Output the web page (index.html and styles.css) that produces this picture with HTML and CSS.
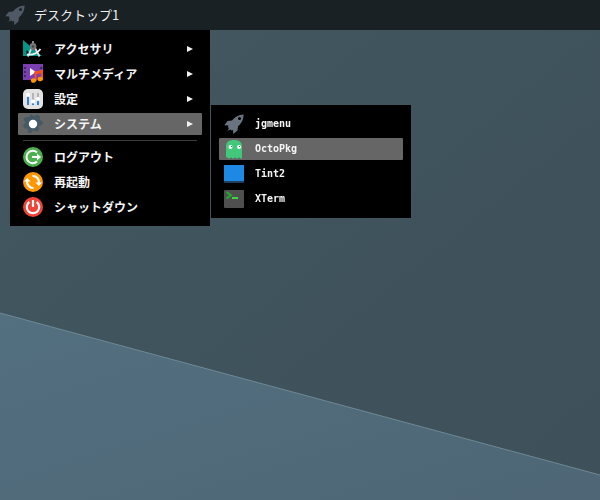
FILE: index.html
```html
<!DOCTYPE html>
<html lang="ja">
<head>
<meta charset="utf-8">
<title>デスクトップ1</title>
<link rel="stylesheet" href="styles.css">
</head>
<body>
<svg class="wallpaper" viewBox="0 0 600 500" preserveAspectRatio="none" aria-hidden="true">
  <defs>
    <linearGradient id="upper" x1="0" y1="0" x2="1" y2="1"><stop offset="0" stop-color="#425761"/><stop offset="1" stop-color="#3e5059"/></linearGradient>
    <linearGradient id="lower" x1="0" y1="0" x2="1" y2="1"><stop offset="0" stop-color="#537080"/><stop offset="1" stop-color="#4e6675"/></linearGradient>
  </defs>
  <rect width="600" height="500" fill="url(#upper)"/>
  <path d="M0 313L600 475V500H0z" fill="url(#lower)"/>
  <path d="M0 313L600 475" stroke="#6e8895" fill="none"/>
</svg>
<svg class="symbols" aria-hidden="true">
  <symbol id="rocket" viewBox="0 0 20 20">
    <path fill-rule="evenodd" d="M19.600.4C14.500.6 11 2.500 8 6.500L3.500 7 .3 11.200l4.200.3-.6 1.500 1 1-1.400 2.800 2.800-1.300 1.200 1.100 1.500-.5.3 4 4.200-3.500.5-4.300C17.500 9 19.600 5.600 19.600.4zM15.500 3.100a1.500 1.500 0 1 1 0 3 1.500 1.500 0 0 1 0-3z"/>
  </symbol>
  <symbol id="arrow" viewBox="0 0 6 6"><path d="M0 0L6 3 0 6z" fill="#f2f2f2"/></symbol>
</svg>

<header class="panel">
  <button class="launcher" type="button" aria-label="jgmenu"><svg class="icon"><use href="#rocket"/></svg></button>
  <span class="desktop-name">デスクトップ1</span>
</header>

<nav class="menu">
  <ul class="list">
    <li><button class="item" type="button">
      <svg class="icon" viewBox="0 0 20 20"><path fill="#009688" d="M0 1L19 17H0z"/><path d="M3.500 11l4 4h-4z" fill="#111"/><path d="M9 2h2v4H9z" fill="#858585"/><path d="M8.500 9L5 17.500M12 9l4.500 8.500" stroke="#dedede" stroke-width="1.800"/><circle cx="10" cy="7.500" r="3.400" fill="#757575"/><circle cx="10" cy="7.500" r="1.200" fill="#444"/><path d="M4 15.500c5.500 .8 10-.8 13.500-5.500" fill="none" stroke="#f4f4f4" stroke-width="1.800"/></svg>
      <span class="label">アクセサリ</span><svg class="arrow"><use href="#arrow"/></svg></button></li>
    <li><button class="item" type="button">
      <svg class="icon" viewBox="0 0 20 20"><path fill="#7b3fb0" d="M0 0h20v16H0z"/><path fill="#43256a" d="M1 3h2v2H1zm0 4h2v2H1zm0 4h2v2H1zM17 3h2v2h-2z"/><path fill="#fff" d="M7 4l6 4-6 4z"/><path d="M12.500 17V8.500l6.500-1.500v8.500" fill="none" stroke="#f4511e" stroke-width="2"/><path d="M11.500 7.500L20 6v3l-8.500 1.500z" fill="#f4511e"/><ellipse cx="10.500" cy="16.500" rx="2.600" ry="2.300" fill="#ff9800"/><ellipse cx="17.300" cy="15" rx="2.600" ry="2.300" fill="#ff9800"/></svg>
      <span class="label">マルチメディア</span><svg class="arrow"><use href="#arrow"/></svg></button></li>
    <li><button class="item" type="button">
      <svg class="icon" viewBox="0 0 20 20"><rect width="20" height="20" rx="5" fill="#e2e2e2"/><path d="M4 6h2v10H4zM9 12h2v4H9zM14 9h2v7h-2z" fill="#2f83dc"/><path d="M9 4h2v7H9zM14 4h2v5h-2z" fill="#b4b4b4"/><g fill="#fff"><circle cx="5" cy="6" r="2"/><circle cx="10" cy="12.500" r="2"/><circle cx="15" cy="10" r="2"/></g></svg>
      <span class="label">設定</span><svg class="arrow"><use href="#arrow"/></svg></button></li>
    <li class="open"><button class="item active" type="button" aria-expanded="true">
      <svg class="icon" viewBox="0 0 20 20"><path fill="#455a64" stroke="#455a64" stroke-linejoin="round" d="M8 .8l3 2 3.500-1.800 2 1.500-.3 3.500 3.200 2-.7 2.700-3.400 1 .5 4-2.300 1.500-3.400-1.500L7.500 19l-2.300-1 .2-3.500-3.900-.8L.6 11.300 3 8.500 1.300 5.200 3 3.300l3.500.5z"/><circle cx="10" cy="10" r="4.200" fill="#fff"/></svg>
      <span class="label">システム</span><svg class="arrow"><use href="#arrow"/></svg></button>
      <ul class="list submenu">
        <li><button class="item" type="button"><svg class="icon rocket"><use href="#rocket"/></svg><span class="label latin">jgmenu</span></button></li>
        <li><button class="item active" type="button">
          <svg class="icon" viewBox="0 0 20 20"><path fill="#41c979" d="M2 18V7.500C2 3 5 1 10 1s8 2 8 6.500V19q-1 1.500-2 0-1-1-2 0-1 1.500-2 0-1-1-2 0-1 1.500-2 0-1-1-2 0-1 1.500-2 0z"/><circle cx="6.500" cy="8" r="2" fill="#fff"/><circle cx="15" cy="8" r="2" fill="#fff"/><path d="M7 7h1v1H7zM15 7h1v1h-1z" fill="#347b4e"/></svg>
          <span class="label latin">OctoPkg</span></button></li>
        <li><button class="item" type="button">
          <svg class="icon" viewBox="0 0 20 20"><rect y="1" width="20" height="18" rx="1" fill="#203f5c"/><path fill="#1e88e5" d="M0 1h20v16H0z"/></svg>
          <span class="label latin">Tint2</span></button></li>
        <li><button class="item" type="button">
          <svg class="icon" viewBox="0 0 20 20"><rect y="1" width="20" height="18" rx="1" fill="#4f4f4f"/><path d="M2.500 3L7 6.300 2.500 9.500" fill="none" stroke="#24aa2b" stroke-width="2"/><path d="M8 9h6" stroke="#3ed744" stroke-width="2"/></svg>
          <span class="label latin">XTerm</span></button></li>
      </ul>
    </li>
    <li class="separator" role="separator"></li>
    <li><button class="item" type="button">
      <svg class="icon" viewBox="0 0 20 20"><circle cx="10" cy="10" r="10" fill="#4caf50"/><path d="M14 5.500a6.200 6.200 0 1 0 0 9M9 10h6" fill="none" stroke="#fff" stroke-width="2"/><path d="M14 6.500l4 3.500-4 3.500z" fill="#fff"/></svg>
      <span class="label">ログアウト</span></button></li>
    <li><button class="item" type="button">
      <svg class="icon" viewBox="0 0 20 20"><circle cx="10" cy="10" r="10" fill="#ff9800"/><path d="M9.500 4A6 6 0 0 1 15.800 11M10.500 16A6 6 0 0 1 4.200 9" fill="none" stroke="#fff" stroke-width="2.200"/><path d="M12.500 10.500H19L15.800 14zM1 9.500h6.500L4.200 6z" fill="#fff"/></svg>
      <span class="label">再起動</span></button></li>
    <li><button class="item" type="button">
      <svg class="icon" viewBox="0 0 20 20"><circle cx="10" cy="10" r="10" fill="#f44336"/><path d="M6.300 5a6.200 6.200 0 1 0 7.400 0M10 3v7" fill="none" stroke="#fff" stroke-width="2.200"/></svg>
      <span class="label">シャットダウン</span></button></li>
  </ul>
</nav>
</body>
</html>
```
FILE: styles.css
```css
* { box-sizing: border-box; }

body {
  margin: 0;
  min-height: 100vh;
  background: #41545e;
  color: #f4f4f4;
  font-family: "Noto Sans CJK JP", sans-serif;
}

button {
  padding: 0;
  border: 0;
  background: none;
  color: inherit;
  font: inherit;
  text-align: left;
}

.wallpaper {
  position: fixed;
  inset: 0;
  z-index: -1;
  width: 100%;
  height: 100%;
}

.symbols {
  position: absolute;
  width: 0;
  height: 0;
}

.panel {
  display: flex;
  align-items: center;
  gap: 9px;
  height: 30px;
  padding: 0 5px;
  background: #1a2125;
}

.launcher {
  display: flex;
  fill: #4e5965;
}

.desktop-name {
  font-size: 13px;
  line-height: 20px;
  color: #eee;
}

.icon {
  flex: none;
  width: 20px;
  height: 20px;
}

.rocket { fill: #687480; }

.menu {
  width: 200px;
  margin-left: 10px;
  padding: 8px;
  background: #000;
}

.list {
  display: flex;
  flex-direction: column;
  gap: 3px;
  margin: 0;
  padding: 0;
  list-style: none;
}

.item {
  display: flex;
  align-items: center;
  gap: 11px;
  width: 100%;
  height: 22px;
  padding: 0 9px 0 5px;
  border-radius: 1px;
  font-size: 12px;
  font-weight: 700;
  line-height: 20px;
}

.active { background: #666; }

.label { flex: 1; }

.latin {
  font-family: "DejaVu Sans Mono", monospace;
  font-size: 10px;
}

.arrow {
  width: 6px;
  height: 6px;
}

.open { position: relative; }

.submenu {
  position: absolute;
  top: -8px;
  left: 193px;
  width: 200px;
  padding: 8px;
  background: #000;
}

.separator {
  height: 5px;
  margin: 0 5px;
  padding: 2px 0;
  background: #3c3c3c content-box;
}
```
